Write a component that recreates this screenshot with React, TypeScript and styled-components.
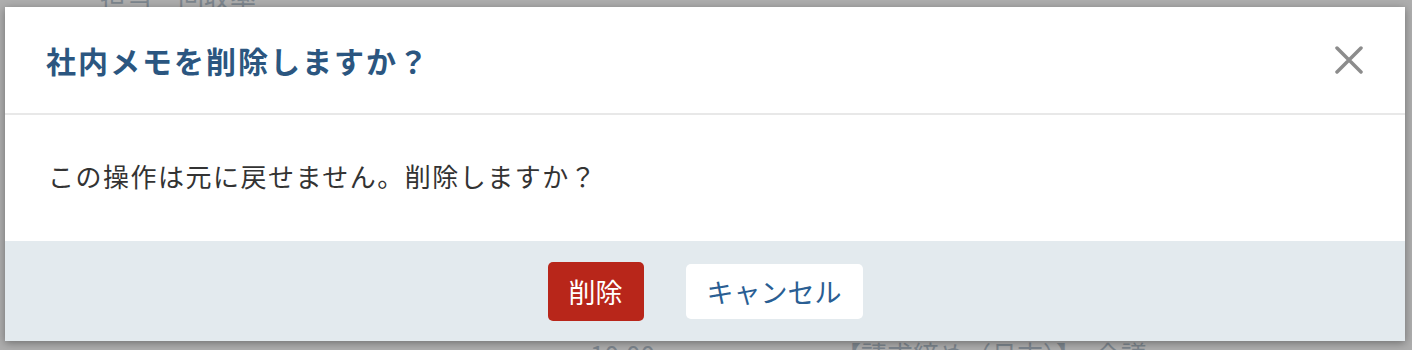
import React from "react";
import styled, { createGlobalStyle } from "styled-components";

const GlobalStyle = createGlobalStyle`
  html, body {
    margin: 0;
    padding: 0;
    background: #adadad;
    font-family: "Noto Sans CJK JP", "Noto Sans", sans-serif;
  }
`;

const Backdrop = styled.div`
  position: relative;
  width: 1412px;
  height: 350px;
  overflow: hidden;
  background: #adadad;
`;

const PageBehind = styled.div`
  display: flex;
  flex-direction: column;
  justify-content: space-between;
  height: 100%;
  color: #5d6b78;
  font-size: 26px;
`;

const BehindRow = styled.div<{ $top?: boolean }>`
  display: flex;
  gap: 180px;
  padding-left: ${(p) => (p.$top ? "100px" : "590px")};
  margin-top: ${(p) => (p.$top ? "-22px" : "0")};
  margin-bottom: ${(p) => (p.$top ? "0" : "-22px")};
  opacity: 0.6;
`;

const Modal = styled.div`
  position: absolute;
  left: 5px;
  top: 7px;
  width: 1400px;
  height: 334px;
  background: #fff;
  display: flex;
  flex-direction: column;
  box-shadow: 0 2px 8px rgba(0, 0, 0, 0.35);
`;

const Header = styled.div`
  height: 108px;
  display: flex;
  align-items: center;
  justify-content: space-between;
  padding: 0 42px 0 41px;
  border-bottom: 2px solid #e8e8e8;
  box-sizing: border-box;
`;

const Title = styled.h2`
  margin: 0;
  font-size: 30px;
  font-weight: 700;
  color: #2b5680;
  letter-spacing: 2px;
`;

const CloseButton = styled.button`
  border: none;
  background: none;
  padding: 0;
  width: 28px;
  height: 28px;
  cursor: pointer;
  display: flex;
  align-items: center;
  justify-content: center;
`;

const Body = styled.div`
  flex: 1;
  display: flex;
  align-items: center;
  padding: 0 42px 6px 43px;
  font-size: 26px;
  letter-spacing: 1.5px;
  color: #333;
`;

const Footer = styled.div`
  height: 100px;
  background: #e3eaee;
  display: flex;
  align-items: center;
  justify-content: center;
  gap: 42px;
`;

const Button = styled.button<{ $danger?: boolean }>`
  font-family: inherit;
  font-size: 27px;
  height: ${(p) => (p.$danger ? "59px" : "55px")};
  padding: 0 21px;
  border-radius: 5px;
  border: none;
  background: ${(p) => (p.$danger ? "#b8261a" : "#fff")};
  color: ${(p) => (p.$danger ? "#fff" : "#2a5e93")};
  cursor: pointer;
`;

export default function App() {
  return (
    <>
      <GlobalStyle />
      <Backdrop>
        <PageBehind>
          <BehindRow $top>
            <span>担当　回収率</span>
          </BehindRow>
          <BehindRow>
            <span>10:00</span>
            <span>【請求締め（月末）】　会議</span>
          </BehindRow>
        </PageBehind>
        <Modal>
          <Header>
            <Title>社内メモを削除しますか？</Title>
            <CloseButton aria-label="閉じる">
              <svg width="28" height="28" viewBox="0 0 28 28">
                <path
                  d="M2 2 L26 26 M26 2 L2 26"
                  stroke="#8c8c8c"
                  strokeWidth="3.5"
                  strokeLinecap="round"
                />
              </svg>
            </CloseButton>
          </Header>
          <Body>この操作は元に戻せません。削除しますか？</Body>
          <Footer>
            <Button $danger>削除</Button>
            <Button>キャンセル</Button>
          </Footer>
        </Modal>
      </Backdrop>
    </>
  );
}
